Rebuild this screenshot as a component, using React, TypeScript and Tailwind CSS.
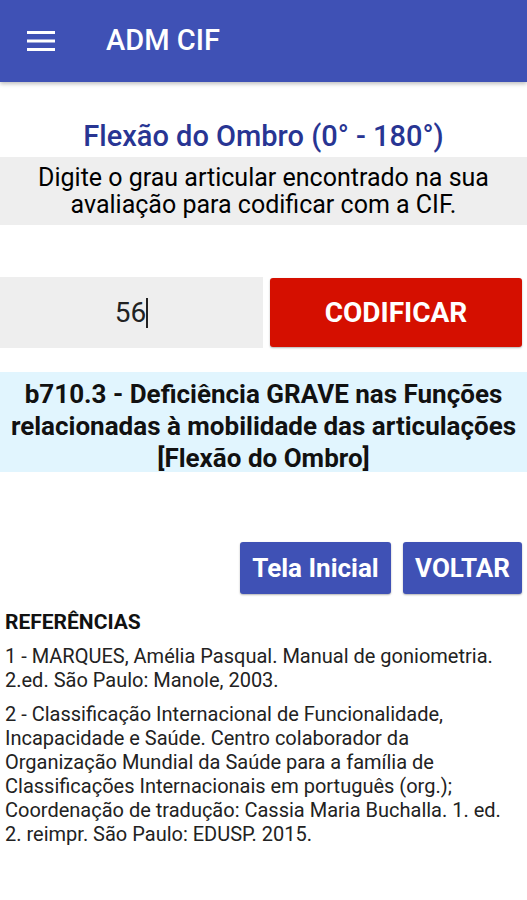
import React from "react";

export default function App() {
  return (
    <div className="w-[527px] h-[900px] bg-white overflow-hidden" style={{ fontFamily: "Roboto, 'Noto Sans', sans-serif" }}>
      <header className="h-[82px] bg-[#3f51b5] flex items-center shadow-[0_2px_4px_rgba(0,0,0,0.25)] relative z-10">
        <svg width="28" height="20" viewBox="0 0 28 20" className="ml-[27px]">
          <rect x="0" y="0" width="28" height="3" fill="#fff" />
          <rect x="0" y="8.5" width="28" height="3" fill="#fff" />
          <rect x="0" y="17" width="28" height="3" fill="#fff" />
        </svg>
        <div className="ml-[51px] text-white text-[29px] font-medium">ADM CIF</div>
      </header>
      <div className="pt-[39px] h-[75px] text-center text-[#283593] text-[29px] font-medium leading-[30px] whitespace-nowrap">
        Flexão do Ombro (0° - 180°)
      </div>
      <div className="h-[68px] bg-[#eeeeee] flex items-center justify-center text-center text-[25px] leading-[27px] text-black whitespace-nowrap">
        <div>
          Digite o grau articular encontrado na sua<br />avaliação para codificar com a CIF.
        </div>
      </div>
      <div className="mt-[52px] h-[71px] flex">
        <div className="w-[263px] bg-[#eeeeee] flex items-center justify-center text-[28px] text-[#222]">
          <span>56</span>
          <span className="inline-block w-[2px] h-[30px] bg-[#222]" />
        </div>
        <div className="flex-1 py-[1px] pl-[7px] pr-[5px]">
          <div className="h-full bg-[#d50f00] rounded-[3px] flex items-center justify-center text-white text-[28px] font-bold shadow-[0_1px_2px_rgba(0,0,0,0.3)]">
            CODIFICAR
          </div>
        </div>
      </div>
      <div className="mt-[24px] h-[100px] pt-[7px] bg-[#e1f5fe] flex items-center justify-center text-center text-[26px] font-bold leading-[32px] text-[#111] whitespace-nowrap">
        <div>
          b710.3 - Deficiência GRAVE nas Funções<br />relacionadas à mobilidade das articulações<br />[Flexão do Ombro]
        </div>
      </div>
      <div className="mt-[70px] flex justify-end gap-[12px] pr-[5px]">
        <div className="w-[151px] h-[52px] bg-[#3f51b5] rounded-[3px] flex items-center justify-center text-white text-[26px] font-bold shadow-[0_1px_2px_rgba(0,0,0,0.3)]">
          Tela Inicial
        </div>
        <div className="w-[119px] h-[52px] bg-[#3f51b5] rounded-[3px] flex items-center justify-center text-white text-[26px] font-bold shadow-[0_1px_2px_rgba(0,0,0,0.3)]">
          VOLTAR
        </div>
      </div>
      <div className="px-[5px] mt-[14px] text-[#111] whitespace-nowrap">
        <div className="text-[21px] font-bold leading-[28px]">REFERÊNCIAS</div>
        <p className="mt-[8px] text-[20px] leading-[24px] text-[#222]">
          1 - MARQUES, Amélia Pasqual. Manual de goniometria.<br />2.ed. São Paulo: Manole, 2003.
        </p>
        <p className="mt-[10px] text-[20px] leading-[24px] text-[#222]">
          2 - Classificação Internacional de Funcionalidade,<br />Incapacidade e Saúde. Centro colaborador da<br />Organização Mundial da Saúde para a família de<br />Classificações Internacionais em português (org.);<br />Coordenação de tradução: Cassia Maria Buchalla. 1. ed.<br />2. reimpr. São Paulo: EDUSP. 2015.
        </p>
      </div>
    </div>
  );
}
